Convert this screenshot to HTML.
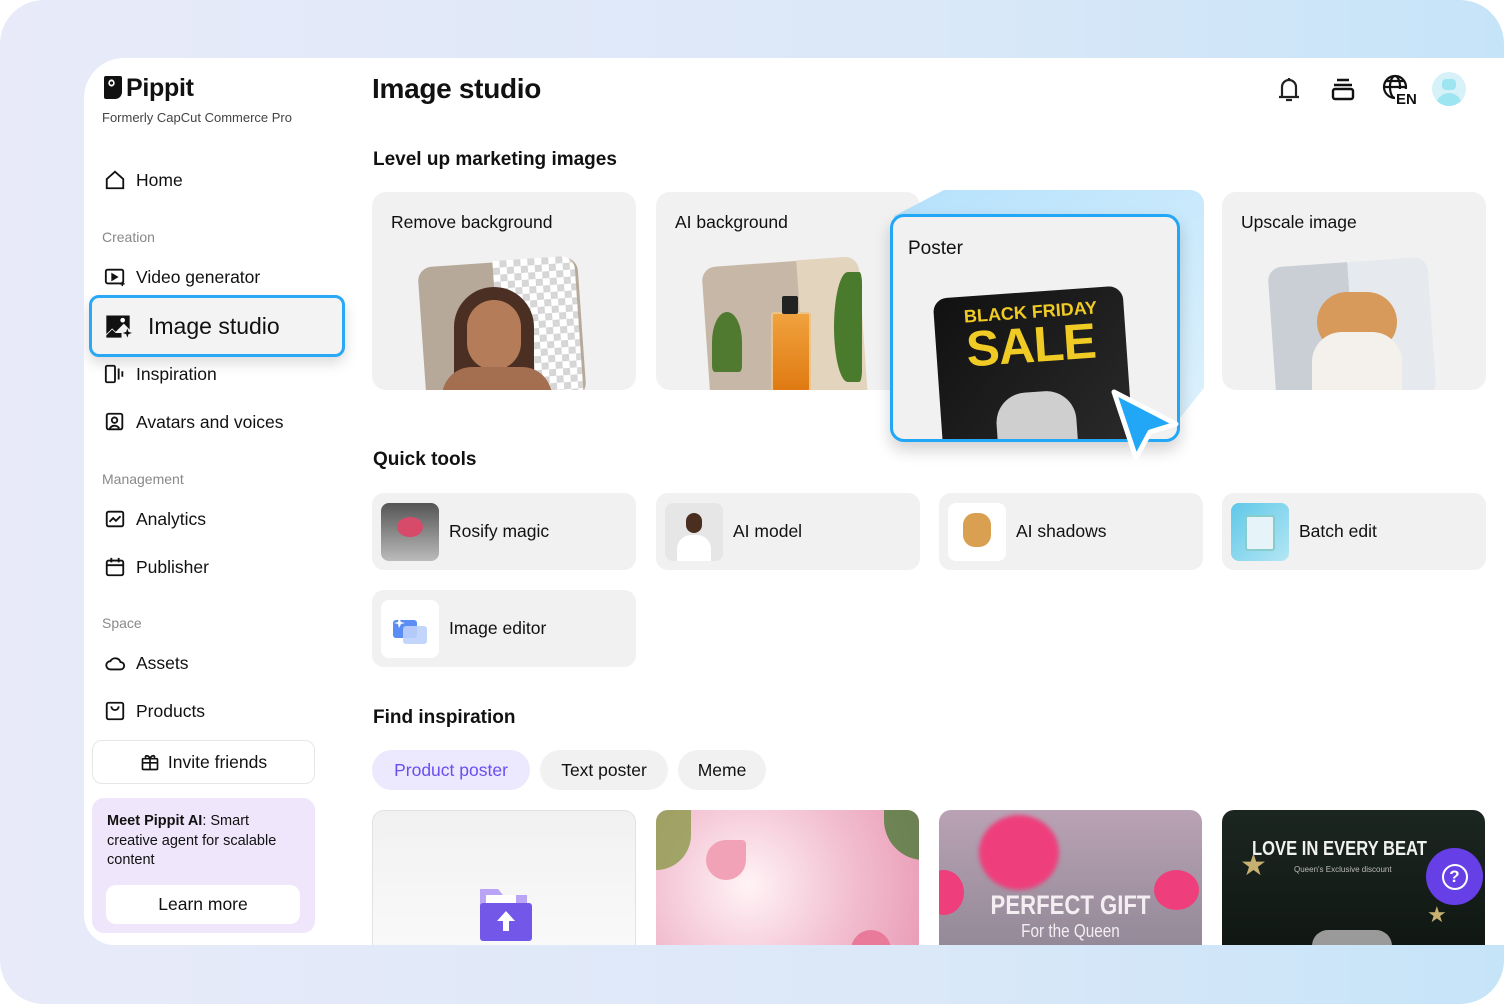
<!DOCTYPE html>
<html><head><meta charset="utf-8"><style>
*{box-sizing:border-box;margin:0;padding:0}
html,body{width:1504px;height:1004px;overflow:hidden;background:#fff;font-family:"Liberation Sans",sans-serif;color:#111}
.bg{position:absolute;left:0;top:0;width:1504px;height:1004px;border-radius:44px;background:linear-gradient(90deg,#e8eaf9 0%,#dbe8f8 60%,#c6e4f8 100%)}
.panel{position:absolute;left:84px;top:58px;width:1420px;height:887px;background:#fff;border-top-left-radius:40px;border-bottom-left-radius:30px;overflow:hidden}
.abs{position:absolute}
.nav{position:absolute;left:20px;font-size:17.5px;display:flex;align-items:center;gap:10px;color:#111}
.nav svg{width:22px;height:22px}
.sec{position:absolute;left:18px;font-size:14px;color:#888}
.h2{position:absolute;font-size:19px;font-weight:bold}
.card{position:absolute;background:#f1f1f1;border-radius:14px;overflow:hidden}
.card .t{position:absolute;left:19px;top:20px;font-size:17.5px}
.qt{position:absolute;width:264px;height:77px;background:#f1f1f1;border-radius:12px;display:flex;align-items:center;font-size:17.5px}
.qt .th{width:58px;height:58px;border-radius:8px;margin:0 10px 0 9px;background:#ddd;overflow:hidden}
.chip{position:absolute;top:692px;height:40px;border-radius:20px;background:#f1f1f1;font-size:17.5px;display:flex;align-items:center;justify-content:center}
</style></head><body>
<div class="bg"></div>
<div class="panel">
 <svg class="abs" style="left:19px;top:17px" width="20" height="25" viewBox="0 0 20 25"><path d="M3 1h14a2 2 0 0 1 2 2v14a7 7 0 0 1-7 7H3a2 2 0 0 1-2-2V3a2 2 0 0 1 2-2z" fill="#111"/><ellipse cx="8.5" cy="8" rx="3.2" ry="3.6" fill="#fff"/><circle cx="8.5" cy="8" r="1.6" fill="#111"/></svg>
 <div class="abs" style="left:42px;top:16px;font-size:25px;font-weight:bold;letter-spacing:-.3px">Pippit</div>
 <div class="abs" style="left:18px;top:52px;font-size:13px;color:#444">Formerly CapCut Commerce Pro</div>

 <div class="nav" style="top:111px"><svg viewBox="0 0 24 24" fill="none" stroke="#111" stroke-width="2"><path d="M3 11l9-8 9 8v10H3z"/></svg>Home</div>
 <div class="sec" style="top:171px">Creation</div>
 <div class="nav" style="top:208px"><svg viewBox="0 0 24 24" fill="none" stroke="#111" stroke-width="2"><rect x="2" y="4" width="19" height="15" rx="2"/><path d="M9 9l5 3-5 3z" fill="#111"/><path d="M20 17v5M17.5 19.5h5" stroke-width="1.6"/></svg>Video generator</div>
 <div class="abs" style="left:5px;top:237px;width:256px;height:62px;border:3px solid #28a8f5;border-radius:10px;background:#f3f3f3;box-shadow:0 6px 14px rgba(0,0,0,.15)"></div>
 <div class="nav" style="top:254px;font-size:23px;gap:16px"><svg viewBox="0 0 24 24" style="width:28px;height:28px"><path d="M2 3h20v12l-5-5-7 7-3-3-5 5z" fill="#111"/><circle cx="16" cy="7" r="2" fill="#fff"/><path d="M2 20l5-5 3 3h5v4H2z" fill="#111"/><path d="M20 14l1 3 3 1-3 1-1 3-1-3-3-1 3-1z" fill="#111"/></svg>Image studio</div>
 <div class="nav" style="top:305px"><svg viewBox="0 0 24 24" fill="none" stroke="#111" stroke-width="2"><rect x="2" y="3" width="10" height="18" rx="1.5"/><path d="M16 6v12M20 9v6"/></svg>Inspiration</div>
 <div class="nav" style="top:353px"><svg viewBox="0 0 24 24" fill="none" stroke="#111" stroke-width="2"><rect x="3" y="3" width="17" height="17" rx="2"/><circle cx="11.5" cy="10" r="3"/><path d="M6 20c1-3 3-4 5.5-4s4 1 5 3"/></svg>Avatars and voices</div>
 <div class="sec" style="top:413px">Management</div>
 <div class="nav" style="top:450px"><svg viewBox="0 0 24 24" fill="none" stroke="#111" stroke-width="2"><rect x="3" y="4" width="18" height="16" rx="2"/><path d="M6 15l4-4 3 3 5-5"/></svg>Analytics</div>
 <div class="nav" style="top:498px"><svg viewBox="0 0 24 24" fill="none" stroke="#111" stroke-width="2"><rect x="3" y="5" width="18" height="16" rx="2"/><path d="M3 10h18M8 2v5M16 2v5"/></svg>Publisher</div>
 <div class="sec" style="top:557px">Space</div>
 <div class="nav" style="top:594px"><svg viewBox="0 0 24 24" fill="none" stroke="#111" stroke-width="2"><path d="M7 19h11a4 4 0 0 0 0-8 6 6 0 0 0-11-1 4.5 4.5 0 0 0 0 9z"/></svg>Assets</div>
 <div class="nav" style="top:642px"><svg viewBox="0 0 24 24" fill="none" stroke="#111" stroke-width="2"><rect x="3" y="3" width="18" height="18" rx="2"/><path d="M8 7a4 4 0 0 0 8 0"/></svg>Products</div>
 <div class="abs" style="left:8px;top:682px;width:223px;height:44px;border:1px solid #e6e6e6;border-radius:10px;display:flex;align-items:center;justify-content:center;gap:8px;font-size:17.5px"><svg width="20" height="20" viewBox="0 0 24 24" fill="none" stroke="#111" stroke-width="2"><rect x="3" y="8" width="18" height="13" rx="1"/><path d="M3 13h18M12 8v13M12 8c-2-5-7-4-5-1M12 8c2-5 7-4 5-1"/></svg>Invite friends</div>
 <div class="abs" style="left:8px;top:740px;width:223px;height:135px;background:#efe6fb;border-radius:12px"></div>
 <div class="abs" style="left:23px;top:754px;width:188px;font-size:14.5px;line-height:19.5px;color:#111"><b>Meet Pippit AI</b>: Smart creative agent for scalable content</div>
 <div class="abs" style="left:22px;top:827px;width:194px;height:39px;background:#fff;border-radius:10px;font-size:17.5px;display:flex;align-items:center;justify-content:center">Learn more</div>

 <div class="abs" style="left:288px;top:15px;font-size:28px;font-weight:bold;letter-spacing:-.3px">Image studio</div>
 <svg class="abs" style="left:1192px;top:18px" width="26" height="28" viewBox="0 0 26 28" fill="none" stroke="#222" stroke-width="2.2"><path d="M6 20V11a7 7 0 0 1 14 0v9M3 21h20M10 24h6M13 2v2"/></svg>
 <svg class="abs" style="left:1246px;top:19px" width="26" height="26" viewBox="0 0 26 26" fill="none" stroke="#111" stroke-width="2.4"><path d="M7 3h12M4 8h18"/><rect x="3" y="12" width="20" height="10" rx="2"/></svg>
 <svg class="abs" style="left:1298px;top:16px" width="38" height="32" viewBox="0 0 38 32"><g fill="none" stroke="#111" stroke-width="2.2"><circle cx="13" cy="13" r="11"/><ellipse cx="13" cy="13" rx="5" ry="11"/><path d="M2 13h22M4 7h18"/></g><rect x="13" y="15" width="25" height="17" fill="#fff"/><text x="14" y="30" font-family="Liberation Sans" font-weight="bold" font-size="15" fill="#111">EN</text></svg>
 <div class="abs" style="left:1348px;top:14px;width:34px;height:34px;border-radius:50%;background:#d6f2f8;overflow:hidden"><div style="position:absolute;left:10px;top:7px;width:14px;height:11px;border-radius:4px;background:#9ee5f2"></div><div style="position:absolute;left:4px;top:21px;width:26px;height:18px;border-radius:13px 13px 0 0;background:#9ee5f2"></div></div>

 <div class="h2" style="left:289px;top:91px">Level up marketing images</div>
 <div class="card" style="left:288px;top:134px;width:264px;height:198px"><div class="t">Remove background</div>
  <div class="abs" style="left:50px;top:70px;width:160px;height:140px;border-radius:14px;background:#b6a99a;transform:rotate(-4deg)"></div>
  <div class="abs" style="left:125px;top:66px;width:82px;height:140px;border-radius:0 14px 0 0;transform:rotate(-4deg);background-color:#fff;background-image:linear-gradient(45deg,#d5d5d5 25%,transparent 25%,transparent 75%,#d5d5d5 75%),linear-gradient(45deg,#d5d5d5 25%,transparent 25%,transparent 75%,#d5d5d5 75%);background-size:14px 14px;background-position:0 0,7px 7px"></div>
  <div class="abs" style="left:82px;top:95px;width:80px;height:110px;border-radius:40px 40px 10px 10px;background:#4a2f22"></div>
  <div class="abs" style="left:95px;top:108px;width:54px;height:70px;border-radius:27px;background:#b57c5a"></div>
  <div class="abs" style="left:70px;top:175px;width:110px;height:30px;border-radius:30px 30px 0 0;background:#a46e50"></div>
 </div>
 <div class="card" style="left:572px;top:134px;width:264px;height:198px"><div class="t">AI background</div>
  <div class="abs" style="left:50px;top:70px;width:155px;height:140px;border-radius:14px;background:#c7b7a6;transform:rotate(-4deg)"></div>
  <div class="abs" style="left:145px;top:66px;width:62px;height:140px;border-radius:0 14px 0 0;background:#e3d4bd;transform:rotate(-4deg)"></div>
  <div class="abs" style="left:115px;top:120px;width:40px;height:80px;border-radius:3px;background:linear-gradient(#f0a23e,#e07a12);border:2px solid #e9c48c"></div>
  <div class="abs" style="left:126px;top:104px;width:16px;height:18px;background:#222;border-radius:2px"></div>
  <div class="abs" style="left:56px;top:120px;width:30px;height:60px;background:#4f7a30;border-radius:50% 50% 10% 10%"></div>
  <div class="abs" style="left:178px;top:80px;width:28px;height:110px;background:#4a7a2c;border-radius:50% 10% 10% 50%"></div>
 </div>
 <svg class="abs" style="left:800px;top:130px" width="322" height="260" viewBox="0 0 322 260"><defs><linearGradient id="pg" x1="0" y1="0" x2="1" y2="1"><stop offset="0" stop-color="#a8dcfb"/><stop offset="1" stop-color="#d6eefc"/></linearGradient></defs><path d="M10 28 L60 2 H306 a14 14 0 0 1 14 14 V200 L296 230 H20 Z" fill="url(#pg)" opacity=".85"/></svg>
 <div class="card" style="left:806px;top:156px;width:290px;height:228px;border:3px solid #22a6f6;box-shadow:0 8px 16px rgba(0,0,0,.18)"><div class="t" style="left:15px;top:21px;font-size:19px">Poster</div>
  <div class="abs" style="left:45px;top:75px;width:190px;height:160px;border-radius:14px;background:linear-gradient(135deg,#111,#2a2a2a);transform:rotate(-4deg)">
   <div style="position:absolute;left:30px;top:10px;font-weight:bold;font-size:18px;color:#f0cb25">BLACK FRIDAY</div>
   <div style="position:absolute;left:30px;top:24px;font-weight:bold;font-size:50px;color:#f0cb25;letter-spacing:-1px">SALE</div>
   <div style="position:absolute;left:55px;top:100px;width:80px;height:60px;border-radius:30px 30px 0 0;background:#cfcfcf"></div>
  </div>
 </div>
 <svg class="abs" style="left:1022px;top:328px" width="76" height="78" viewBox="0 0 76 78"><path d="M8 6 L70 38 L44 46 L30 72 Z" fill="#22a6f6" stroke="#fff" stroke-width="5" stroke-linejoin="round"/></svg>
 <div class="card" style="left:1138px;top:134px;width:264px;height:198px"><div class="t">Upscale image</div>
  <div class="abs" style="left:50px;top:70px;width:160px;height:140px;border-radius:14px;background:linear-gradient(90deg,#c9cfd5 50%,#e6eaee 50%);transform:rotate(-4deg)"></div>
  <div class="abs" style="left:95px;top:100px;width:80px;height:60px;border-radius:40px;background:#d79a5a"></div>
  <div class="abs" style="left:90px;top:140px;width:90px;height:60px;border-radius:30px 30px 0 0;background:#f4f1ec"></div>
 </div>

 <div class="h2" style="left:289px;top:391px">Quick tools</div>
 <div class="qt" style="left:288px;top:435px"><div class="th" style="background:linear-gradient(#555,#bbb)"><div style="margin:14px 0 0 16px;width:26px;height:20px;border-radius:50%;background:#d84a6a"></div></div>Rosify magic</div>
 <div class="qt" style="left:572px;top:435px"><div class="th" style="background:#e6e6e6"><div style="margin:10px 0 0 21px;width:16px;height:20px;border-radius:8px;background:#4a2e20"></div><div style="margin:2px 0 0 12px;width:34px;height:26px;border-radius:14px 14px 0 0;background:#fff"></div></div>AI model</div>
 <div class="qt" style="left:855px;top:435px"><div class="th" style="background:#fff"><div style="margin:10px 0 0 15px;width:28px;height:34px;border-radius:12px;background:#d8a050"></div></div>AI shadows</div>
 <div class="qt" style="left:1138px;top:435px"><div class="th" style="background:linear-gradient(135deg,#5fc8e8,#b4e6f4)"><div style="margin:12px 0 0 14px;width:30px;height:36px;border-radius:3px;background:#e6f4fa;border:2px solid #8cc"></div></div>Batch edit</div>
 <div class="qt" style="left:288px;top:532px"><div class="th" style="background:#fff"><svg width="58" height="58" viewBox="0 0 58 58"><rect x="12" y="20" width="24" height="18" rx="3" fill="#5b8ef5"/><rect x="22" y="26" width="24" height="18" rx="3" fill="#bcd0fb" opacity=".9"/><path d="M18 18l2 4 4 1-4 1-2 4-1-4-4-1 4-1z" fill="#fff"/></svg></div>Image editor</div>

 <div class="h2" style="left:289px;top:649px">Find inspiration</div>
 <div class="chip" style="left:288px;width:158px;background:#ece8fd;color:#6b4ef0">Product poster</div>
 <div class="chip" style="left:456px;width:128px">Text poster</div>
 <div class="chip" style="left:594px;width:88px">Meme</div>

 <div class="abs" style="left:288px;top:752px;width:264px;height:150px;border:1px solid #e2e2e2;border-radius:12px;background:linear-gradient(#f1f1f1,#fafafa)">
  <svg style="position:absolute;left:103px;top:72px" width="58" height="60" viewBox="0 0 58 60"><path d="M4 6h18l5 6h24v40H4z" fill="#b9a4f6"/><path d="M10 12h30v12H10z" fill="#fff"/><rect x="4" y="20" width="52" height="38" rx="3" fill="#7257e8"/><path d="M30 28l-9 10h6v10h6V38h6z" fill="#fff"/></svg>
 </div>
 <div class="abs" style="left:572px;top:752px;width:263px;height:150px;border-radius:12px;background:radial-gradient(circle at 35% 50%,#fff3f6,#f2bfd0 55%,#e99bb6);overflow:hidden">
  <div style="position:absolute;left:50px;top:30px;width:40px;height:40px;border-radius:50% 10% 50% 50%;background:#f1a2b6"></div>
  <div style="position:absolute;left:195px;top:120px;width:40px;height:40px;border-radius:50%;background:#e97a9a"></div>
  <div style="position:absolute;left:0;top:0;width:35px;height:60px;border-radius:0 0 60px 0;background:#8c9a4a;opacity:.8"></div>
  <div style="position:absolute;left:228px;top:0;width:40px;height:50px;border-radius:0 0 0 40px;background:#4e7a3a;opacity:.8"></div>
 </div>
 <div class="abs" style="left:855px;top:752px;width:263px;height:150px;border-radius:12px;background:linear-gradient(#b9a2b4,#8f8795);overflow:hidden">
  <div style="position:absolute;left:40px;top:5px;width:80px;height:75px;border-radius:50%;background:#ee3f7c;filter:blur(2px)"></div>
  <div style="position:absolute;left:-15px;top:60px;width:40px;height:45px;border-radius:50%;background:#ee3f7c"></div>
  <div style="position:absolute;left:215px;top:60px;width:45px;height:40px;border-radius:50%;background:#ee3f7c"></div>
  <div style="position:absolute;left:0;top:80px;width:263px;text-align:center;font-weight:bold;font-size:27px;color:#f4eef2;transform:scaleX(.82)">PERFECT GIFT</div>
  <div style="position:absolute;left:0;top:111px;width:263px;text-align:center;font-size:18px;color:#f4eef2;transform:scaleX(.85)">For the Queen</div>
 </div>
 <div class="abs" style="left:1138px;top:752px;width:263px;height:150px;border-radius:12px;background:linear-gradient(#1c2620,#0f1612);overflow:hidden">
  <div style="position:absolute;left:30px;top:28px;width:200px;white-space:nowrap;font-weight:bold;font-size:20px;color:#f1f1f1;transform:scaleX(.83);transform-origin:left">LOVE IN EVERY BEAT</div>
  <div style="position:absolute;left:72px;top:55px;font-size:8px;color:#bbb">Queen's Exclusive discount</div>
  <div style="position:absolute;left:18px;top:38px;color:#c8b070;font-size:30px">★</div>
  <div style="position:absolute;left:205px;top:92px;color:#c8b070;font-size:22px">★</div>
  <div style="position:absolute;left:90px;top:120px;width:80px;height:40px;border-radius:16px;background:#9a9a9a"></div>
 </div>
 <div class="abs" style="left:1342px;top:790px;width:57px;height:57px;border-radius:50%;background:#6640e6;display:flex;align-items:center;justify-content:center"><div style="width:26px;height:26px;border:2.5px solid #fff;border-radius:50%;color:#fff;font-weight:bold;font-size:17px;text-align:center;line-height:21px">?</div></div>
</div>
</body></html>
